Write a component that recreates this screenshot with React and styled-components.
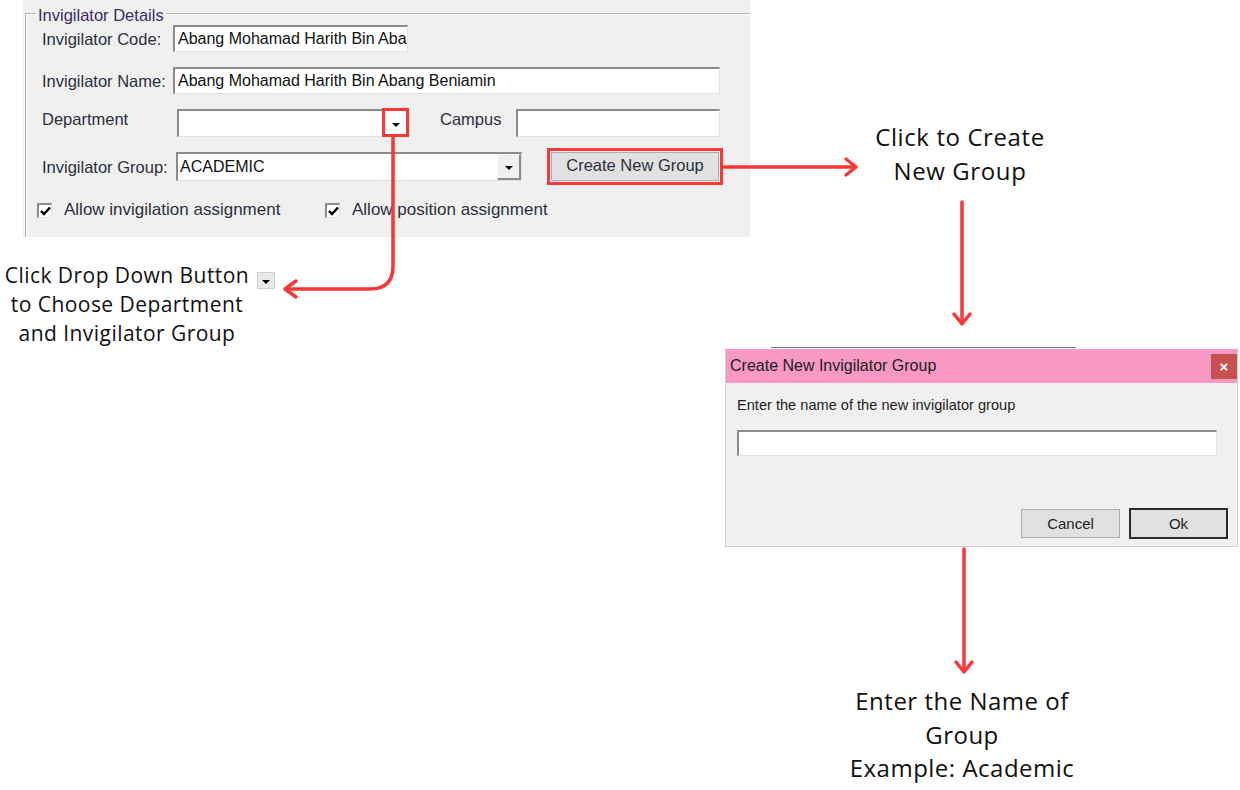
import { createGlobalStyle, styled } from "styled-components";

const RED = "#f83737";

const GlobalStyle = createGlobalStyle`
  html, body {
    margin: 0;
    padding: 0;
    background: #fff;
  }
  body {
    font-family: "Liberation Sans", Arial, sans-serif;
  }
`;

const App = () => {
  return (
    <Canvas>
      <GlobalStyle />

      <FormPanel>
        <GroupBox>
          <Legend>Invigilator Details</Legend>

          <Row $h={27} $mt={1}>
            <Label $w={131}>Invigilator Code:</Label>
            <Field $w={235}>Abang Mohamad Harith Bin Aba</Field>
          </Row>

          <Row $h={27} $mt={15}>
            <Label $w={131}>Invigilator Name:</Label>
            <Field $w={547}>Abang Mohamad Harith Bin Abang Beniamin</Field>
          </Row>

          <Row $h={28} $mt={15} $align="flex-start">
            <Label $w={135} $pt={1}>Department</Label>
            <Field $w={231} $combo>
              <DropButton>
                <Caret />
              </DropButton>
              <Highlight />
            </Field>
            <Label $w={76} $ml={32} $pt={1}>Campus</Label>
            <Field $w={204} />
          </Row>

          <Row $h={29} $mt={15}>
            <Label $w={134}>Invigilator Group:</Label>
            <Field $w={346} $combo>
              ACADEMIC
              <DropButton $raised>
                <Caret />
              </DropButton>
            </Field>
            <WinButton>Create New Group</WinButton>
          </Row>

          <Row $h={18} $mt={20} $ml={-5}>
            <CheckGroup $w={288}>
              <CheckBox>
                <CheckMark />
              </CheckBox>
              <CheckLabel>Allow invigilation assignment</CheckLabel>
            </CheckGroup>
            <CheckGroup>
              <CheckBox>
                <CheckMark />
              </CheckBox>
              <CheckLabel>Allow position assignment</CheckLabel>
            </CheckGroup>
          </Row>
        </GroupBox>
      </FormPanel>

      <Note $x={0} $y={261} $w={254} $size={21} $lh={29} $ls={0.45}>
        Click Drop Down Button
        <br />
        to Choose Department
        <br />
        and Invigilator Group
      </Note>
      <MiniDrop>
        <Caret />
      </MiniDrop>

      <Note $x={830} $y={120} $w={260} $size={24} $lh={34} $ls={0.6}>
        Click to Create
        <br />
        New Group
      </Note>

      <Dialog>
        <TitleBar>
          <Title>Create New Invigilator Group</Title>
          <CloseButton>×</CloseButton>
        </TitleBar>
        <DialogBody>
          <Prompt>Enter the name of the new invigilator group</Prompt>
          <Field $w={480} $h={26} $mt={17} />
          <ButtonRow>
            <DialogButton>Cancel</DialogButton>
            <DialogButton $default>Ok</DialogButton>
          </ButtonRow>
        </DialogBody>
      </Dialog>

      <Note $x={822} $y={684} $w={280} $size={24} $lh={33.5} $ls={0.5}>
        Enter the Name of
        <br />
        Group
        <br />
        Example: Academic
      </Note>

      <Arrows viewBox="0 0 1240 790">
        <g fill="none" stroke={RED} strokeWidth="3.5" strokeLinecap="round" strokeLinejoin="round">
          <path d="M393 138 V266 Q393 289 370 289 H286" />
          <path d="M296 281 L285 289 L296 297" />
          <path d="M724 167 H855" />
          <path d="M846 159 L856 167 L846 175" />
          <path d="M962 202 V323" />
          <path d="M954 314 L962 324 L970 314" />
          <path d="M964 549 V671" />
          <path d="M956 662 L964 672 L972 662" />
        </g>
      </Arrows>
    </Canvas>
  );
};

export default App;

const Canvas = styled.div`
  position: relative;
  width: 1240px;
  height: 790px;
  overflow: hidden;
  background: #fff;
`;

const FormPanel = styled.div`
  box-sizing: border-box;
  margin-left: 23px;
  width: 727px;
  height: 237px;
  padding-top: 13px;
  background: #f0f0f0;
`;

const GroupBox = styled.div`
  box-sizing: border-box;
  margin-left: 2px;
  height: 224px;
  padding-left: 16px;
  border-top: 1px solid #b4b4b4;
  border-left: 1px solid #b4b4b4;
  box-shadow: inset 1px 1px 0 #fff;
`;

const Legend = styled.div`
  width: fit-content;
  margin: -8px 0 0 -6px;
  padding: 0 2px;
  background: #f0f0f0;
  color: #3b2b68;
  font-size: 16.5px;
  line-height: 18px;
`;

const Row = styled.div`
  display: flex;
  align-items: ${(p) => p.$align || "center"};
  height: ${(p) => p.$h}px;
  margin-top: ${(p) => p.$mt}px;
  margin-left: ${(p) => p.$ml || 0}px;
`;

const Label = styled.div`
  flex: none;
  width: ${(p) => p.$w}px;
  margin-left: ${(p) => p.$ml || 0}px;
  padding-top: ${(p) => p.$pt || 0}px;
  color: #2c2f3e;
  font-size: 16.5px;
  line-height: 18px;
  white-space: nowrap;
`;

const Field = styled.div`
  position: relative;
  box-sizing: border-box;
  flex: none;
  display: flex;
  align-items: center;
  width: ${(p) => p.$w}px;
  height: ${(p) => (p.$h ? `${p.$h}px` : "100%")};
  margin-top: ${(p) => p.$mt || 0}px;
  padding-left: ${(p) => (p.$combo ? 2 : 3)}px;
  background: #fff;
  border-top: 2px solid #8b8b8b;
  border-left: 2px solid #8b8b8b;
  border-right: 1px solid #e2e2e2;
  border-bottom: 1px solid #e2e2e2;
  color: #111;
  font-size: 16px;
  white-space: nowrap;
  overflow: ${(p) => (p.$combo ? "visible" : "hidden")};
`;

const DropButton = styled.div`
  box-sizing: border-box;
  display: flex;
  align-items: center;
  justify-content: center;
  width: ${(p) => (p.$raised ? 24 : 22)}px;
  height: 100%;
  margin-left: auto;
  background: ${(p) => (p.$raised ? "#f0f0f0" : "#fff")};
  border-top: ${(p) => (p.$raised ? "1px solid #fff" : "none")};
  border-left: ${(p) => (p.$raised ? "1px solid #fff" : "none")};
  border-right: ${(p) => (p.$raised ? "2px solid #8b8b8b" : "none")};
  border-bottom: ${(p) => (p.$raised ? "2px solid #8b8b8b" : "none")};
  padding-top: 2px;
`;

const Caret = styled.span`
  width: 0;
  height: 0;
  border-left: 4px solid transparent;
  border-right: 4px solid transparent;
  border-top: 4px solid #000;
`;

const Highlight = styled.div`
  position: absolute;
  right: -2px;
  top: -3px;
  width: 21px;
  height: 23px;
  border: 3px solid ${RED};
`;

const WinButton = styled.div`
  box-sizing: border-box;
  flex: none;
  display: flex;
  align-items: center;
  justify-content: center;
  width: 168px;
  height: 100%;
  margin-left: 29px;
  background: #e1e1e1;
  border: 1px solid #adadad;
  outline: 3px solid ${RED};
  outline-offset: 1px;
  color: #2c2f3e;
  font-size: 16.5px;
  padding-bottom: 2px;
`;

const CheckGroup = styled.div`
  display: flex;
  align-items: center;
  width: ${(p) => (p.$w ? `${p.$w}px` : "auto")};
`;

const CheckBox = styled.div`
  box-sizing: border-box;
  flex: none;
  display: flex;
  align-items: center;
  justify-content: center;
  width: 15px;
  height: 15px;
  background: #fff;
  border-top: 2px solid #8b8b8b;
  border-left: 2px solid #8b8b8b;
  border-right: 1px solid #e2e2e2;
  border-bottom: 1px solid #e2e2e2;
`;

const CheckMark = () => (
  <svg width="11" height="10" viewBox="0 0 11 10">
    <path d="M1 5 L4 8 L10 1.5" fill="none" stroke="#000" strokeWidth="2.4" />
  </svg>
);

const CheckLabel = styled.span`
  margin-left: 12px;
  color: #2c2f3e;
  font-size: 17px;
  line-height: 18px;
  white-space: nowrap;
`;

const Note = styled.div`
  position: absolute;
  left: ${(p) => p.$x}px;
  top: ${(p) => p.$y}px;
  width: ${(p) => p.$w}px;
  color: #111;
  font-family: "Open Sans", "Noto Sans", sans-serif;
  font-size: ${(p) => p.$size}px;
  line-height: ${(p) => p.$lh}px;
  letter-spacing: ${(p) => p.$ls || 0}px;
  text-align: center;
  white-space: nowrap;
`;

const MiniDrop = styled.div`
  position: absolute;
  left: 257px;
  top: 272px;
  box-sizing: border-box;
  display: flex;
  align-items: center;
  justify-content: center;
  width: 18px;
  height: 17px;
  padding-top: 2px;
  background: #e9e9e9;
  border: 1px solid #cfcfcf;
`;

const Dialog = styled.div`
  position: absolute;
  left: 725px;
  top: 347px;
  box-sizing: border-box;
  display: flex;
  flex-direction: column;
  width: 513px;
  height: 200px;
  background: #f0f0f0;
  border: 1px solid #d2d2d2;
  border-top: 2px solid #fff;

  &::before {
    content: "";
    position: absolute;
    left: 45px;
    top: -2px;
    width: 305px;
    height: 1px;
    background: #7d7d7d;
  }
`;

const TitleBar = styled.div`
  display: flex;
  align-items: center;
  height: 34px;
  padding-left: 4px;
  background: #f898c4;
`;

const Title = styled.span`
  color: #1c1c1c;
  font-size: 16px;
`;

const CloseButton = styled.div`
  display: flex;
  align-items: center;
  justify-content: center;
  width: 26px;
  height: 25px;
  margin-left: auto;
  background: #c75050;
  color: #fff;
  font-size: 15px;
  font-weight: bold;
`;

const DialogBody = styled.div`
  flex: 1;
  display: flex;
  flex-direction: column;
  padding: 14px 9px 7px 11px;
`;

const Prompt = styled.div`
  color: #1e1e1e;
  font-size: 14.6px;
  line-height: 16px;
`;

const ButtonRow = styled.div`
  display: flex;
  align-items: center;
  justify-content: flex-end;
  gap: 9px;
  margin-top: auto;
  height: 31px;
`;

const DialogButton = styled.div`
  box-sizing: border-box;
  display: flex;
  align-items: center;
  justify-content: center;
  width: 99px;
  height: ${(p) => (p.$default ? 31 : 29)}px;
  background: #e1e1e1;
  border: ${(p) => (p.$default ? "2px solid #2b2b2b" : "1px solid #adadad")};
  color: #1e1e1e;
  font-size: 15px;
`;

const Arrows = styled.svg`
  position: absolute;
  left: 0;
  top: 0;
  width: 1240px;
  height: 790px;
  pointer-events: none;
`;
